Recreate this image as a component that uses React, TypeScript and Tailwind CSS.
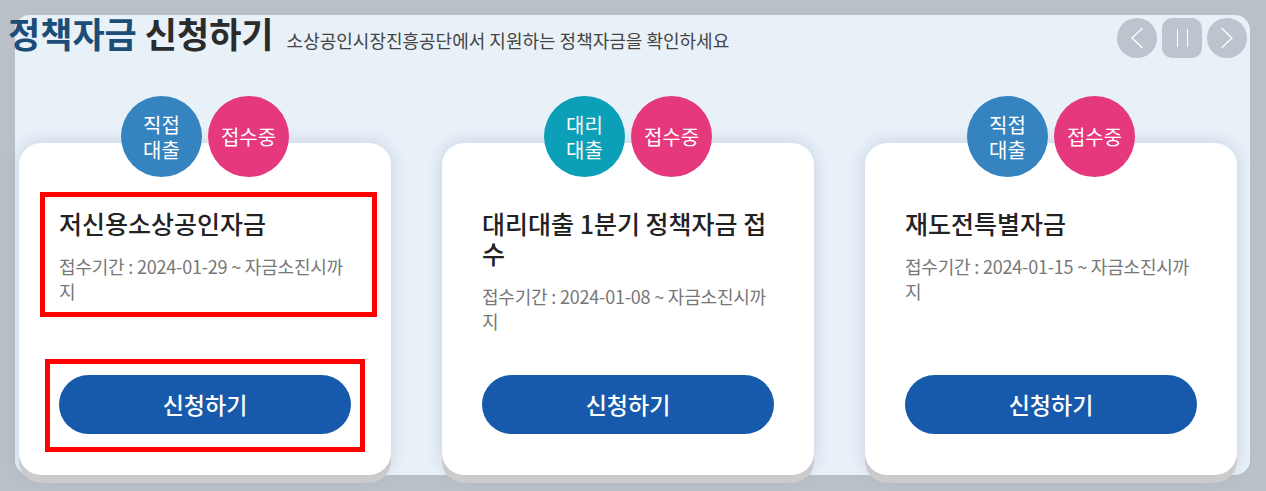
const font = "font-['Noto_Sans_CJK_KR','Noto_Sans',sans-serif]";

type Fund = {
  kind: [string, string];
  kindColor: string;
  title: string;
  period: string;
  marked?: boolean;
};

const funds: Fund[] = [
  { kind: ["직접", "대출"], kindColor: "bg-[#3584bf]", title: "저신용소상공인자금", period: "2024-01-29", marked: true },
  { kind: ["대리", "대출"], kindColor: "bg-[#0b9fb8]", title: "대리대출 1분기 정책자금 접수", period: "2024-01-08" },
  { kind: ["직접", "대출"], kindColor: "bg-[#3584bf]", title: "재도전특별자금", period: "2024-01-15" },
];

function NavButtons() {
  return (
    <div className="flex gap-[5px]">
      <button className="w-10 h-10 rounded-full bg-[#bcc4ce] flex items-center justify-center">
        <svg width="14" height="24" viewBox="0 0 14 24" fill="none" stroke="white" strokeWidth="1.3">
          <path d="M12.5 2 L2 12 L12.5 22" />
        </svg>
      </button>
      <button className="w-10 h-10 rounded-[10px] bg-[#bcc4ce] flex items-center justify-center gap-[9px]">
        <span className="w-px h-[18px] bg-white" />
        <span className="w-px h-[18px] bg-white" />
      </button>
      <button className="w-10 h-10 rounded-full bg-[#bcc4ce] flex items-center justify-center">
        <svg width="14" height="24" viewBox="0 0 14 24" fill="none" stroke="white" strokeWidth="1.3">
          <path d="M1.5 2 L12 12 L1.5 22" />
        </svg>
      </button>
    </div>
  );
}

function FundCard({ fund }: { fund: Fund }) {
  return (
    <div className="relative w-[372px] h-[332px] shrink-0 bg-white rounded-[22px] flex flex-col px-[40px] pt-[65px] pb-[41px] shadow-[0_8px_0_#cbcbcb,0_0_16px_rgba(70,100,140,0.22)]">
      <div className="absolute -top-[47px] left-1/2 -translate-x-1/2 flex gap-[6px]">
        <div className={`w-[81px] h-[81px] rounded-full ${fund.kindColor} text-white text-[20px] leading-[25px] flex flex-col items-center justify-center`}>
          <span>{fund.kind[0]}</span>
          <span>{fund.kind[1]}</span>
        </div>
        <div className="w-[81px] h-[81px] rounded-full bg-[#e6387d] text-white text-[20px] flex items-center justify-center">
          접수중
        </div>
      </div>

      <h3 className="text-[25px] leading-[30px] font-medium text-[#222]">{fund.title}</h3>
      <p className="mt-4 text-[18px] leading-[25px] text-[#777] tracking-[-0.2px]">
        접수기간 : {fund.period} ~ 자금소진시까지
      </p>

      <button className="mt-auto h-[59px] w-full rounded-full bg-[#1759aa] text-white text-[23px] font-medium">
        신청하기
      </button>

      {fund.marked && (
        <>
          <div className="absolute left-[21px] top-[49px] w-[337px] h-[125px] border-[5px] border-[#ff0000]" />
          <div className="absolute left-[26px] top-[216px] w-[320px] h-[93px] border-[5px] border-[#ff0000]" />
        </>
      )}
    </div>
  );
}

export default function App() {
  return (
    <div className={`w-[1266px] h-[491px] bg-[#b9c0c8] pt-[15px] pl-[15px] pr-[16px] overflow-hidden ${font}`}>
      <div className="h-[460px] rounded-[15px] bg-[#e8f0f8]">
        <div className="flex items-start justify-between pr-[3px]">
          <div className="flex items-baseline -ml-[7px] mt-[-5px]">
            <h2 className="text-[35px] leading-[46px] font-bold">
              <span className="text-[#1b4d76]">정책자금</span> <span className="text-[#2b2b2b]">신청하기</span>
            </h2>
            <span className="ml-[13px] text-[18px] text-[#444]">
              소상공인시장진흥공단에서 지원하는 정책자금을 확인하세요
            </span>
          </div>
          <div className="mt-[3px]">
            <NavButtons />
          </div>
        </div>

        <div className="flex gap-[51px] pl-[4px] mt-[85px]">
          {funds.map((f, i) => (
            <FundCard key={i} fund={f} />
          ))}
        </div>
      </div>
    </div>
  );
}
